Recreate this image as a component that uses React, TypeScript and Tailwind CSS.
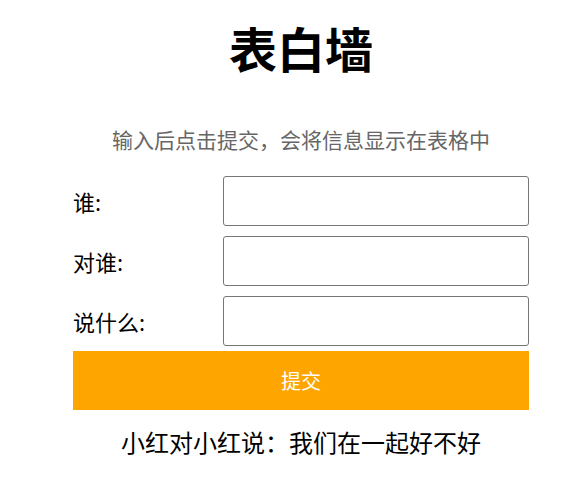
import React, { useState } from 'react';

const rows = [
  { label: '谁:', key: 'from' },
  { label: '对谁:', key: 'to' },
  { label: '说什么:', key: 'msg' },
];

const App: React.FC = () => {
  const [values, setValues] = useState<Record<string, string>>({ from: '', to: '', msg: '' });
  const [messages, setMessages] = useState<string[]>(['小红对小红说：我们在一起好不好']);

  const submit = () => {
    if (!values.from || !values.to || !values.msg) return;
    setMessages([...messages, `${values.from}对${values.to}说：${values.msg}`]);
    setValues({ from: '', to: '', msg: '' });
  };

  return (
    <div
      className="w-[456px] ml-[73px] text-black"
      style={{ fontFamily: '"Noto Sans CJK SC", "Noto Sans", sans-serif' }}
    >
      {/* Title */}
      <h1 className="pt-[15px] text-center text-[48px] leading-[64px] font-bold">表白墙</h1>

      {/* Hint */}
      <p className="mt-[45px] text-center text-[21px] leading-[30px] text-[#666]">
        输入后点击提交，会将信息显示在表格中
      </p>

      {/* Form */}
      <div className="mt-[22px] flex flex-col gap-[10px]">
        {rows.map((r) => (
          <div key={r.key} className="flex items-center h-[50px]">
            <span className="w-[150px] text-[22px]">{r.label}</span>
            <input
              className="w-[306px] h-[50px] border border-[#767676] rounded-[3px] px-2 text-[18px] outline-none"
              value={values[r.key]}
              onChange={(e) => setValues({ ...values, [r.key]: e.target.value })}
            />
          </div>
        ))}
      </div>

      <button
        className="mt-[5px] w-full h-[59px] bg-[#ffa500] text-white text-[20px]"
        onClick={submit}
      >
        提交
      </button>

      {/* Messages */}
      <div className="mt-[14px]">
        {messages.map((m, i) => (
          <p key={i} className="text-center text-[24px] leading-[36px]">
            {m}
          </p>
        ))}
      </div>
    </div>
  );
};

export default App;
